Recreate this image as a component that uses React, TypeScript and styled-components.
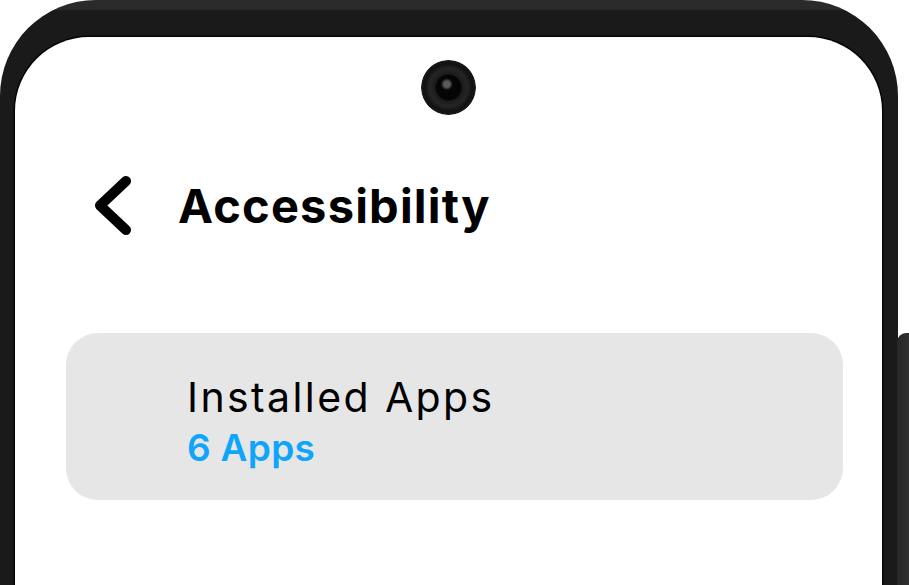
import React from "react";
import styled, { createGlobalStyle } from "styled-components";

const GlobalStyle = createGlobalStyle`
  html, body {
    margin: 0;
    padding: 0;
    background: #ffffff;
    overflow: hidden;
  }
  * { box-sizing: border-box; }
`;

const Page = styled.div`
  width: 909px;
  height: 585px;
  overflow: hidden;
  display: flex;
  align-items: flex-start;
  background: #ffffff;
  font-family: Inter, "Open Sans", "Liberation Sans", sans-serif;
`;

const Phone = styled.div`
  flex: none;
  width: 898px;
  height: 640px;
  padding: 37px 16px 0 15px;
  border-radius: 96px 96px 0 0;
  background: linear-gradient(#2a2a2a 0 9px, #1a1a1a 11px);
  display: flex;
`;

const SideButton = styled.div`
  flex: none;
  width: 14px;
  height: 300px;
  margin-top: 333px;
  margin-left: -1px;
  border-radius: 9px 0 0 0;
  background: linear-gradient(90deg, #262626, #333333);
`;

const Screen = styled.div`
  flex: 1;
  background: #ffffff;
  border-radius: 74px 74px 0 0;
  box-shadow: 0 0 0 1.5px #050505;
  display: flex;
  flex-direction: column;
`;

const CameraRow = styled.div`
  display: flex;
  justify-content: center;
  margin-top: 23px;
`;

const Camera = styled.div`
  width: 55px;
  height: 55px;
  border-radius: 50%;
  background:
    radial-gradient(circle at 47% 44%, #5a5a5a 0 3px, rgba(40,40,40,0) 6px),
    radial-gradient(circle at 50% 50%, #050505 0 12px, #1c1c1c 14px, #252525 19px, #101010 24px, #1a1a1a 27px, rgba(26,26,26,0) 28px);
  filter: blur(0.6px);
`;

const Header = styled.div`
  display: flex;
  align-items: center;
  height: 64px;
  margin-top: 58px;
  padding-left: 78px;
  gap: 45px;
`;

const BackButton = styled.svg`
  flex: none;
  width: 40px;
  height: 64px;
`;

const Title = styled.h1`
  margin: 0;
  font-size: 47px;
  line-height: 1;
  font-weight: 700;
  color: #000000;
  letter-spacing: 1.2px;
`;

const Card = styled.div`
  margin: 96px 39px 0 51px;
  height: 167px;
  border-radius: 32px;
  background: #e6e6e6;
  padding: 44px 0 0 121px;
  display: flex;
  flex-direction: column;
  gap: 11px;
`;

const CardTitle = styled.div`
  font-size: 41px;
  line-height: 1;
  font-weight: 400;
  color: #000000;
  letter-spacing: 2.4px;
`;

const CardSub = styled.div`
  font-size: 37px;
  line-height: 1;
  font-weight: 600;
  color: #0ea5fb;
  letter-spacing: 0.3px;
`;

export default function App() {
  return (
    <>
      <GlobalStyle />
      <Page>
        <Phone>
          <Screen>
            <CameraRow>
              <Camera />
            </CameraRow>
            <Header>
              <BackButton viewBox="0 0 40 64" aria-label="Back">
                <path
                  d="M33 8 L7 32.5 L33 57"
                  fill="none"
                  stroke="#000"
                  strokeWidth="10"
                  strokeLinecap="round"
                  strokeLinejoin="round"
                />
              </BackButton>
              <Title>Accessibility</Title>
            </Header>
            <Card>
              <CardTitle>Installed Apps</CardTitle>
              <CardSub>6 Apps</CardSub>
            </Card>
          </Screen>
        </Phone>
        <SideButton />
      </Page>
    </>
  );
}
